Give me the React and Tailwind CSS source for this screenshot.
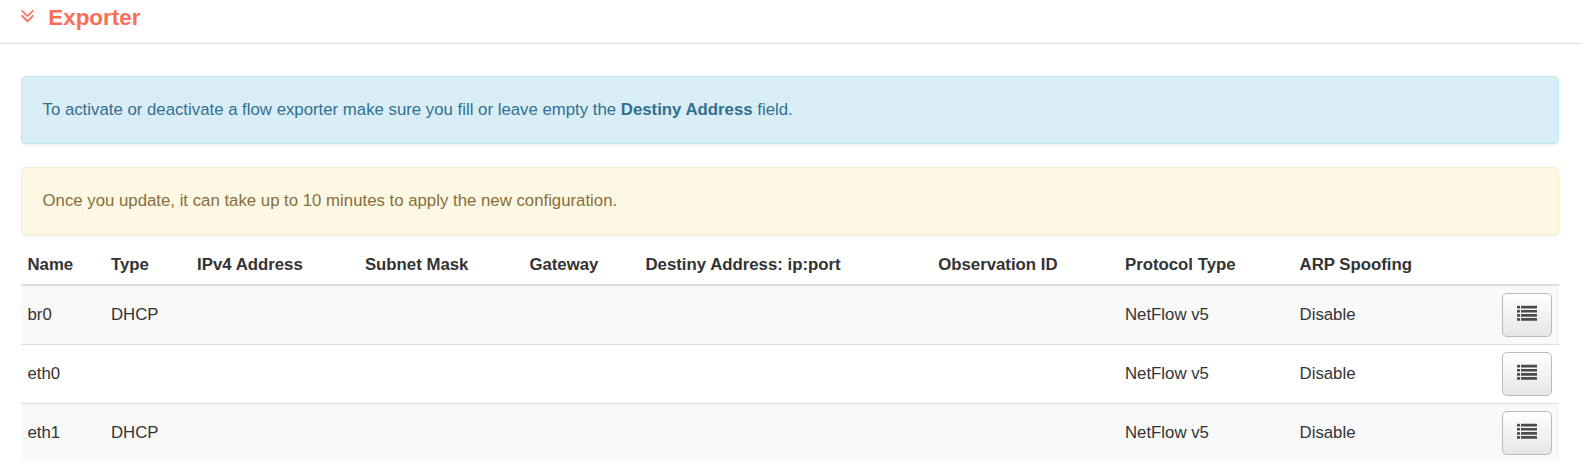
const columns = [
  { label: "Name", key: "name", width: "w-[83.4px]" },
  { label: "Type", key: "type", width: "w-[86.2px]" },
  { label: "IPv4 Address", key: "ip", width: "w-[167.8px]" },
  { label: "Subnet Mask", key: "mask", width: "w-[164.5px]" },
  { label: "Gateway", key: "gateway", width: "w-[116.1px]" },
  { label: "Destiny Address: ip:port", key: "destiny", width: "w-[292.7px]" },
  { label: "Observation ID", key: "observation", width: "w-[186.8px]" },
  { label: "Protocol Type", key: "protocol", width: "w-[174.6px]" },
  { label: "ARP Spoofing", key: "arp", width: "w-[203px]" },
];

const rows = [
  { name: "br0", type: "DHCP", protocol: "NetFlow v5", arp: "Disable" },
  { name: "eth0", protocol: "NetFlow v5", arp: "Disable" },
  { name: "eth1", type: "DHCP", protocol: "NetFlow v5", arp: "Disable" },
];

function ListIcon() {
  return (
    <svg className="mb-[4px]" width="20" height="16" viewBox="0 0 20 16" fill="#4b4b4d" aria-hidden="true">
      {[0.8, 4.9, 9.1, 13.1].map((y) => (
        <g key={y}>
          <rect x="0" y={y} width="3" height="2.7" rx="0.3" />
          <rect x="4" y={y} width="16" height="2.7" rx="0.3" />
        </g>
      ))}
    </svg>
  );
}

function Chevrons() {
  return (
    <svg width="13" height="13" viewBox="0 0 13 13" fill="none" stroke="#fa6e57" strokeWidth="1.7" aria-hidden="true">
      <path d="M0.6 0.5 L6.5 6.1 L12.4 0.5" />
      <path d="M0.6 5.4 L6.5 11.2 L12.4 5.4" />
    </svg>
  );
}

export default function App() {
  return (
    <div className="h-[475px] overflow-hidden bg-white font-['Liberation_Sans',Arial,sans-serif] text-[16.8px] text-[#333]">
      <header className="flex h-11 w-[1580px] items-start border-b border-[#ddd] pl-[21px] text-[#fa6e57]">
        <span className="mt-[10px] block">
          <Chevrons />
        </span>
        <h1 className="ml-[14.3px] mt-[5px] text-[22.4px] font-bold leading-[26px]">Exporter</h1>
      </header>
      <main className="ml-[21px] mt-8 w-[1538px]">
        <div className="h-[68px] rounded-[5px] border border-[#bce8f1] bg-[#d9edf7] px-[20.5px] py-5 leading-[26px] text-[#31708f] shadow-[inset_0_2px_0_rgba(255,255,255,0.2),0_2px_2px_rgba(0,0,0,0.05)]">
          To activate or deactivate a flow exporter make sure you fill or leave empty the{" "}
          <strong>Destiny Address</strong> field.
        </div>
        <div className="mt-[23px] h-[68px] rounded-[5px] border border-[#faebcc] bg-[#fcf8e3] px-[20.5px] py-5 leading-[26px] text-[#8a6d3b] shadow-[0_2px_2px_rgba(0,0,0,0.05)]">
          Once you update, it can take up to 10 minutes to apply the new configuration.
        </div>
        <div role="table">
          <div role="row" className="flex h-[51px] items-center border-b-2 border-[#ddd] pt-[10px] font-bold">
            {columns.map((c) => (
              <div role="columnheader" key={c.key} className={`${c.width} shrink-0 whitespace-nowrap pl-[6.5px]`}>
                {c.label}
              </div>
            ))}
          </div>
          {rows.map((row, i) => (
            <div
              role="row"
              key={row.name}
              className={`flex items-center ${i > 0 ? "h-[59px] border-t border-[#ddd]" : "h-[58px]"} ${i % 2 ? "bg-white" : "bg-[#f9f9f9]"}`}
            >
              {columns.map((c) => (
                <div role="cell" key={c.key} className={`${c.width} shrink-0 pl-[6.5px]`}>
                  {row[c.key]}
                </div>
              ))}
              <button
                aria-label="Details"
                className="ml-[5.9px] flex h-11 w-[50px] shrink-0 items-center justify-center rounded-[5px] border border-[#bbb] bg-linear-to-b from-white to-[#e6e6e6]"
              >
                <ListIcon />
              </button>
            </div>
          ))}
        </div>
      </main>
    </div>
  );
}
